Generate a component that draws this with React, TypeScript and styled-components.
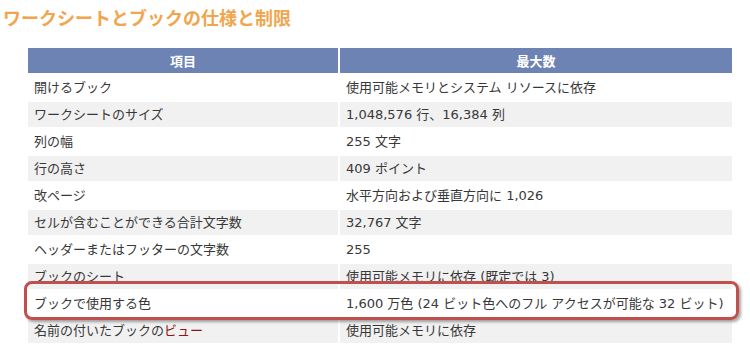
import styled, { createGlobalStyle } from "styled-components";

interface SpecRow {
  item: string;
  link?: string;
  value: string;
  highlight?: boolean;
}

const rows: SpecRow[] = [
  { item: "開けるブック", value: "使用可能メモリとシステム リソースに依存" },
  { item: "ワークシートのサイズ", value: "1,048,576 行、16,384 列" },
  { item: "列の幅", value: "255 文字" },
  { item: "行の高さ", value: "409 ポイント" },
  { item: "改ページ", value: "水平方向および垂直方向に 1,026" },
  { item: "セルが含むことができる合計文字数", value: "32,767 文字" },
  { item: "ヘッダーまたはフッターの文字数", value: "255" },
  { item: "ブックのシート", value: "使用可能メモリに依存 (既定では 3)" },
  {
    item: "ブックで使用する色",
    value: "1,600 万色 (24 ビット色へのフル アクセスが可能な 32 ビット)",
    highlight: true,
  },
  { item: "名前の付いたブックの", link: "ビュー", value: "使用可能メモリに依存" },
];

export default function App() {
  return (
    <>
      <GlobalStyle />
      <Page>
        <Heading>ワークシートとブックの仕様と制限</Heading>
        <TableWrap>
          <Table>
            <thead>
              <tr>
                <HeadCell $width={298}>項目</HeadCell>
                <HeadCell>最大数</HeadCell>
              </tr>
            </thead>
            <tbody>
              {rows.map((row, i) => (
                <Row key={row.item} $shaded={i % 2 === 1}>
                  <Cell>
                    {row.item}
                    {row.link && <Link>{row.link}</Link>}
                  </Cell>
                  <Cell>{row.value}</Cell>
                </Row>
              ))}
            </tbody>
          </Table>
          <Highlight />
        </TableWrap>
      </Page>
    </>
  );
}

const GlobalStyle = createGlobalStyle`
  body {
    margin: 0;
    background: #ffffff;
    font-family: "DejaVu Sans", "Noto Sans CJK JP", sans-serif;
    color: #383838;
  }
`;

const Page = styled.div`
  width: 750px;
  height: 349px;
  overflow: hidden;
`;

const Heading = styled.h2`
  margin: 0;
  padding: 5px 3px 0;
  font-family: "Noto Sans CJK JP", sans-serif;
  font-size: 18px;
  line-height: 24px;
  font-weight: 700;
  color: #f1a54d;
`;

const TableWrap = styled.div`
  position: relative;
  margin: 17px 0 0 26px;
  width: 708px;
`;

const Table = styled.table`
  width: 100%;
  border-collapse: separate;
  border-spacing: 2px;
  table-layout: fixed;
`;

const HeadCell = styled.th<{ $width?: number }>`
  width: ${({ $width }) => ($width ? `${$width}px` : "auto")};
  height: 25px;
  padding: 0 6px;
  background: #6c83b4;
  color: #ffffff;
  font-family: "Noto Sans CJK JP", sans-serif;
  font-size: 13px;
  font-weight: 700;
  line-height: 18px;
  text-align: center;
  vertical-align: middle;
`;

const Row = styled.tr<{ $shaded: boolean }>`
  background: ${({ $shaded }) => ($shaded ? "#f1f1f1" : "#ffffff")};
`;

const Cell = styled.td`
  height: 25px;
  padding: 0 6px;
  font-size: 13px;
  line-height: 18px;
  white-space: nowrap;
  vertical-align: middle;
`;

const Link = styled.span`
  color: #8f1515;
`;

const Highlight = styled.div`
  position: absolute;
  left: -2px;
  top: 235px;
  width: 709px;
  height: 33px;
  border: 3px solid #c0504d;
  border-radius: 8px;
  box-shadow: 2px 2px 3px rgba(0, 0, 0, 0.35);
  pointer-events: none;
`;
